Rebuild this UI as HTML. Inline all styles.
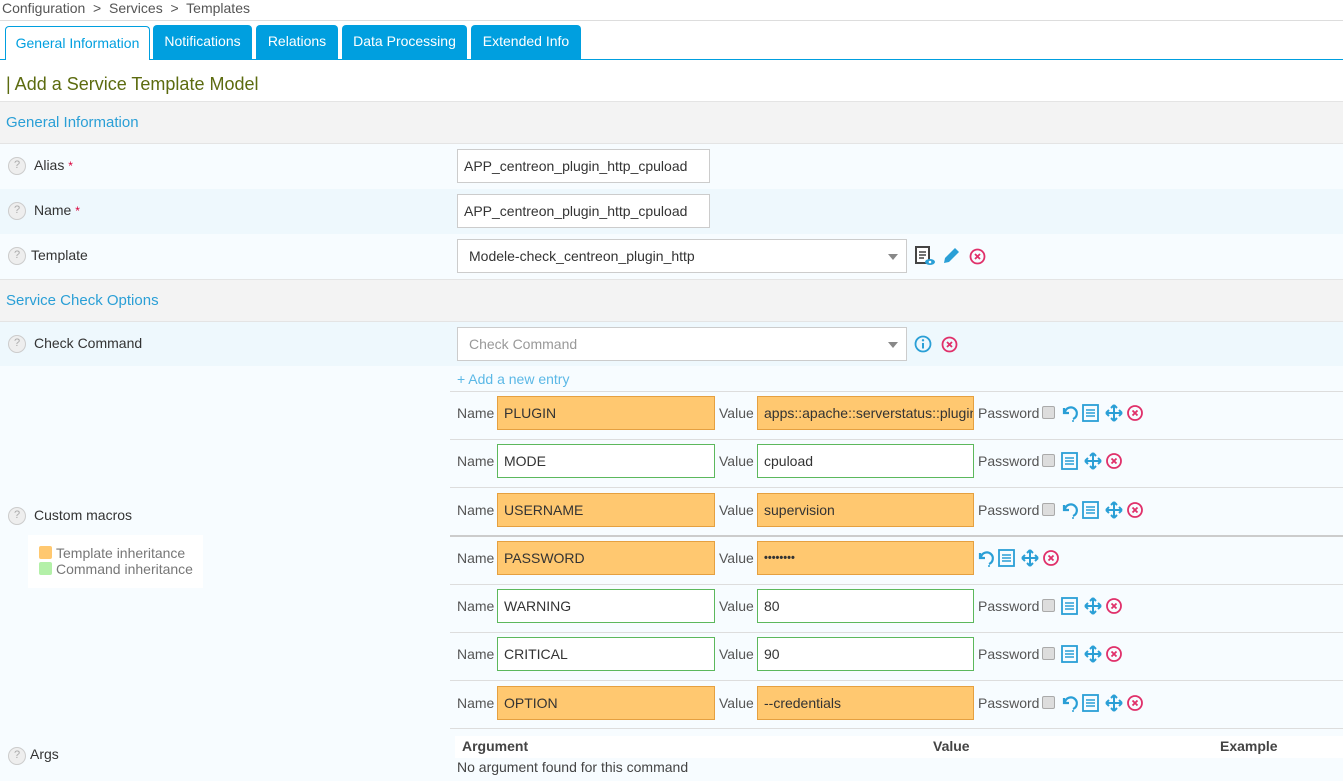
<!DOCTYPE html>
<html><head><meta charset="utf-8">
<style>
*{box-sizing:border-box;margin:0;padding:0}
body{width:1343px;height:781px;overflow:hidden;background:#fff;font-family:"Liberation Sans",Arial,sans-serif;font-size:14px;color:#333;position:relative}
.a{position:absolute;white-space:nowrap}
.tab{position:absolute;top:25px;height:35px;background:#009fdf;color:#fff;border-radius:4px 4px 0 0;font-size:14px;line-height:32px;text-align:center}
.row{position:absolute;left:0;width:1343px}
.q{position:absolute;width:18px;height:18px;border-radius:50%;border:1.5px solid #ccc;background:#eee;color:#aaa;font-size:11px;line-height:15px;text-align:center}
.lbl{position:absolute;font-size:14px;color:#333}
.star{color:#d9003b;font-size:12px}
.inp{position:absolute;height:34px;border:1px solid #ccc;background:#fff;padding-left:6px;line-height:32px;font-size:14px;color:#333;overflow:hidden}
.or{background:#ffc870;border-color:#e5a040}
.gr{background:#fff;border-color:#5cb85c}
.sm{position:absolute;font-size:14px;color:#555}
.sep{position:absolute;left:450px;width:893px;height:1px;background:#ddd}
.cb{position:absolute;width:13px;height:13px;border:1px solid #aaa;border-radius:2px;background:#ddd}
svg{position:absolute}
</style></head><body>
<div class="a" style="left:2px;top:0;color:#555;font-size:14px">Configuration &nbsp;&gt;&nbsp; Services &nbsp;&gt;&nbsp; Templates</div>
<div class="a" style="left:0;top:20px;width:1343px;height:1px;background:#ddd"></div>
<div class="a" style="left:0;top:59px;width:1343px;height:1px;background:#009fdf"></div>
<div class="tab" style="left:5px;width:145px;background:#fff;border:1px solid #009fdf;border-bottom:none;color:#009fdf;top:26px;height:34px;line-height:32px">General Information</div>
<div class="tab" style="left:153px;width:99px">Notifications</div>
<div class="tab" style="left:256px;width:82px">Relations</div>
<div class="tab" style="left:342px;width:125px">Data Processing</div>
<div class="tab" style="left:471px;width:110px">Extended Info</div>
<div class="a" style="left:6px;top:74px;font-size:18px;color:#5c6b0f">| Add a Service Template Model</div>
<div class="row" style="top:101px;height:43px;background:#f3f3f3;border-top:1px solid #e4e4e4;border-bottom:1px solid #e4e4e4"></div>
<div class="a" style="left:6px;top:114px;font-size:15px;color:#2a9fd6">General Information</div>
<div class="row" style="top:144px;height:45px;background:#f7fcff"></div>
<div class="row" style="top:189px;height:45px;background:#eef8fd"></div>
<div class="row" style="top:234px;height:45px;background:#f7fcff"></div>
<div class="row" style="top:279px;height:43px;background:#f3f3f3;border-top:1px solid #e4e4e4;border-bottom:1px solid #e4e4e4"></div>
<div class="a" style="left:6px;top:292px;font-size:15px;color:#2a9fd6">Service Check Options</div>
<div class="row" style="top:322px;height:44px;background:#eef8fd"></div>
<div class="row" style="top:366px;height:415px;background:#f7fcff"></div>

<div class="q" style="left:8px;top:157px">?</div><div class="lbl" style="left:34px;top:157px">Alias <span class="star">*</span></div>
<div class="q" style="left:8px;top:202px">?</div><div class="lbl" style="left:34px;top:202px">Name <span class="star">*</span></div>
<div class="q" style="left:8px;top:247px">?</div><div class="lbl" style="left:31px;top:247px">Template</div>
<div class="q" style="left:8px;top:335px">?</div><div class="lbl" style="left:34px;top:335px">Check Command</div>
<div class="q" style="left:8px;top:507px">?</div><div class="lbl" style="left:34px;top:507px">Custom macros</div>
<div class="a" style="left:28px;top:535px;width:175px;height:53px;background:#fff"></div>
<div class="a" style="left:39px;top:546px;width:13px;height:13px;background:#ffc870;border-radius:2px"></div>
<div class="a" style="left:39px;top:562px;width:13px;height:13px;background:#b3f0a8;border-radius:2px"></div>
<div class="a" style="left:56px;top:545px;font-size:14px;color:#777">Template inheritance</div>
<div class="a" style="left:56px;top:561px;font-size:14px;color:#777">Command inheritance</div>
<div class="q" style="left:8px;top:747px">?</div><div class="lbl" style="left:30px;top:746px">Args</div>

<div class="inp" style="left:457px;top:149px;width:253px">APP_centreon_plugin_http_cpuload</div>
<div class="inp" style="left:457px;top:194px;width:253px">APP_centreon_plugin_http_cpuload</div>
<div class="inp" style="left:457px;top:239px;width:450px;padding-left:11px">Modele-check_centreon_plugin_http</div>
<div class="a" style="left:888px;top:254px;border-left:5px solid transparent;border-right:5px solid transparent;border-top:6px solid #888"></div>
<svg style="left:914px;top:245px" width="22" height="22" viewBox="0 0 22 22"><rect x="2" y="2" width="13" height="16" fill="#fff" stroke="#444" stroke-width="2"/><path d="M5 7h7M5 10h7M5 13h5" stroke="#444" stroke-width="1.5"/><ellipse cx="16" cy="17" rx="5" ry="3" fill="#2a9fd6"/><circle cx="16" cy="17" r="1.3" fill="#fff"/></svg>
<svg style="left:941px;top:246px" width="20" height="20" viewBox="0 0 20 20"><path d="M3 17l1-5L14 2l4 4L8 16z" fill="#2a9fd6"/></svg>
<svg style="left:969px;top:248px" width="17" height="17" viewBox="0 0 17 17"><circle cx="8.5" cy="8.5" r="7" fill="none" stroke="#e0306a" stroke-width="1.8"/><path d="M6 6l5 5M11 6l-5 5" stroke="#e0306a" stroke-width="1.8"/></svg>

<div class="inp" style="left:457px;top:327px;width:450px;padding-left:11px;color:#999">Check Command</div>
<div class="a" style="left:888px;top:342px;border-left:5px solid transparent;border-right:5px solid transparent;border-top:6px solid #888"></div>
<svg style="left:914px;top:335px" width="18" height="18" viewBox="0 0 18 18"><circle cx="9" cy="9" r="7.5" fill="none" stroke="#2a9fd6" stroke-width="1.8"/><circle cx="9" cy="5.3" r="1.2" fill="#2a9fd6"/><path d="M9 8v5.5" stroke="#2a9fd6" stroke-width="2"/></svg>
<svg style="left:941px;top:336px" width="17" height="17" viewBox="0 0 17 17"><circle cx="8.5" cy="8.5" r="7" fill="none" stroke="#e0306a" stroke-width="1.8"/><path d="M6 6l5 5M11 6l-5 5" stroke="#e0306a" stroke-width="1.8"/></svg>
<div class="a" style="left:457px;top:371px;font-size:14px;color:#5bb8e6">+ Add a new entry</div>

<div class="sep" style="top:391px"></div>
<div class="sep" style="top:439px"></div>
<div class="sep" style="top:487px"></div>
<div class="sep" style="top:535px;height:2px;background:#ccc"></div>
<div class="sep" style="top:584px"></div>
<div class="sep" style="top:632px"></div>
<div class="sep" style="top:680px"></div>
<div class="sep" style="top:728px"></div>

<!-- macro rows -->
<div class="sm" style="left:457px;top:405px">Name</div><div class="inp or" style="left:497px;top:396px;width:218px">PLUGIN</div><div class="sm" style="left:719px;top:405px">Value</div><div class="inp or" style="left:757px;top:396px;width:217px">apps::apache::serverstatus::plugin</div><div class="sm" style="left:978px;top:405px">Password</div><div class="cb" style="left:1042px;top:406px"></div>
<div class="sm" style="left:457px;top:453px">Name</div><div class="inp gr" style="left:497px;top:444px;width:218px">MODE</div><div class="sm" style="left:719px;top:453px">Value</div><div class="inp gr" style="left:757px;top:444px;width:217px">cpuload</div><div class="sm" style="left:978px;top:453px">Password</div><div class="cb" style="left:1042px;top:454px"></div>
<div class="sm" style="left:457px;top:502px">Name</div><div class="inp or" style="left:497px;top:493px;width:218px">USERNAME</div><div class="sm" style="left:719px;top:502px">Value</div><div class="inp or" style="left:757px;top:493px;width:217px">supervision</div><div class="sm" style="left:978px;top:502px">Password</div><div class="cb" style="left:1042px;top:503px"></div>
<div class="sm" style="left:457px;top:550px">Name</div><div class="inp or" style="left:497px;top:541px;width:218px">PASSWORD</div><div class="sm" style="left:719px;top:550px">Value</div><div class="inp or" style="left:757px;top:541px;width:217px;font-size:11px;font-weight:bold">••••••••</div>
<div class="sm" style="left:457px;top:598px">Name</div><div class="inp gr" style="left:497px;top:589px;width:218px">WARNING</div><div class="sm" style="left:719px;top:598px">Value</div><div class="inp gr" style="left:757px;top:589px;width:217px">80</div><div class="sm" style="left:978px;top:598px">Password</div><div class="cb" style="left:1042px;top:599px"></div>
<div class="sm" style="left:457px;top:646px">Name</div><div class="inp gr" style="left:497px;top:637px;width:218px">CRITICAL</div><div class="sm" style="left:719px;top:646px">Value</div><div class="inp gr" style="left:757px;top:637px;width:217px">90</div><div class="sm" style="left:978px;top:646px">Password</div><div class="cb" style="left:1042px;top:647px"></div>
<div class="sm" style="left:457px;top:695px">Name</div><div class="inp or" style="left:497px;top:686px;width:218px">OPTION</div><div class="sm" style="left:719px;top:695px">Value</div><div class="inp or" style="left:757px;top:686px;width:217px">--credentials</div><div class="sm" style="left:978px;top:695px">Password</div><div class="cb" style="left:1042px;top:696px"></div>

<!-- icon sets: undo, list, move, delete -->
<svg style="left:1061px;top:403px" width="84" height="20" viewBox="0 0 84 20">
<path d="M3 5v5h5M4 9a6 6 0 1 1 8 7" fill="none" stroke="#2a9fd6" stroke-width="2.2"/><circle cx="12" cy="18" r="1" fill="#2a9fd6"/>
<rect x="22" y="2" width="15" height="16" fill="none" stroke="#2a9fd6" stroke-width="1.8"/><path d="M25 7h9M25 10h9M25 13h9" stroke="#2a9fd6" stroke-width="1.4"/>
<path d="M53 2v16M45 10h16M53 2l-3 3M53 2l3 3M53 18l-3-3M53 18l3-3M45 10l3-3M45 10l3 3M61 10l-3-3M61 10l-3 3" stroke="#2a9fd6" stroke-width="2" fill="none"/>
<circle cx="74" cy="10" r="7" fill="none" stroke="#e0306a" stroke-width="1.8"/><path d="M71.5 7.5l5 5M76.5 7.5l-5 5" stroke="#e0306a" stroke-width="1.8"/></svg>
<svg style="left:1061px;top:500px" width="84" height="20" viewBox="0 0 84 20">
<path d="M3 5v5h5M4 9a6 6 0 1 1 8 7" fill="none" stroke="#2a9fd6" stroke-width="2.2"/><circle cx="12" cy="18" r="1" fill="#2a9fd6"/>
<rect x="22" y="2" width="15" height="16" fill="none" stroke="#2a9fd6" stroke-width="1.8"/><path d="M25 7h9M25 10h9M25 13h9" stroke="#2a9fd6" stroke-width="1.4"/>
<path d="M53 2v16M45 10h16M53 2l-3 3M53 2l3 3M53 18l-3-3M53 18l3-3M45 10l3-3M45 10l3 3M61 10l-3-3M61 10l-3 3" stroke="#2a9fd6" stroke-width="2" fill="none"/>
<circle cx="74" cy="10" r="7" fill="none" stroke="#e0306a" stroke-width="1.8"/><path d="M71.5 7.5l5 5M76.5 7.5l-5 5" stroke="#e0306a" stroke-width="1.8"/></svg>
<svg style="left:977px;top:548px" width="84" height="20" viewBox="0 0 84 20">
<path d="M3 5v5h5M4 9a6 6 0 1 1 8 7" fill="none" stroke="#2a9fd6" stroke-width="2.2"/><circle cx="12" cy="18" r="1" fill="#2a9fd6"/>
<rect x="22" y="2" width="15" height="16" fill="none" stroke="#2a9fd6" stroke-width="1.8"/><path d="M25 7h9M25 10h9M25 13h9" stroke="#2a9fd6" stroke-width="1.4"/>
<path d="M53 2v16M45 10h16M53 2l-3 3M53 2l3 3M53 18l-3-3M53 18l3-3M45 10l3-3M45 10l3 3M61 10l-3-3M61 10l-3 3" stroke="#2a9fd6" stroke-width="2" fill="none"/>
<circle cx="74" cy="10" r="7" fill="none" stroke="#e0306a" stroke-width="1.8"/><path d="M71.5 7.5l5 5M76.5 7.5l-5 5" stroke="#e0306a" stroke-width="1.8"/></svg>
<svg style="left:1061px;top:693px" width="84" height="20" viewBox="0 0 84 20">
<path d="M3 5v5h5M4 9a6 6 0 1 1 8 7" fill="none" stroke="#2a9fd6" stroke-width="2.2"/><circle cx="12" cy="18" r="1" fill="#2a9fd6"/>
<rect x="22" y="2" width="15" height="16" fill="none" stroke="#2a9fd6" stroke-width="1.8"/><path d="M25 7h9M25 10h9M25 13h9" stroke="#2a9fd6" stroke-width="1.4"/>
<path d="M53 2v16M45 10h16M53 2l-3 3M53 2l3 3M53 18l-3-3M53 18l3-3M45 10l3-3M45 10l3 3M61 10l-3-3M61 10l-3 3" stroke="#2a9fd6" stroke-width="2" fill="none"/>
<circle cx="74" cy="10" r="7" fill="none" stroke="#e0306a" stroke-width="1.8"/><path d="M71.5 7.5l5 5M76.5 7.5l-5 5" stroke="#e0306a" stroke-width="1.8"/></svg>
<svg style="left:1040px;top:451px" width="84" height="20" viewBox="0 0 84 20">
<rect x="22" y="2" width="15" height="16" fill="none" stroke="#2a9fd6" stroke-width="1.8"/><path d="M25 7h9M25 10h9M25 13h9" stroke="#2a9fd6" stroke-width="1.4"/>
<path d="M53 2v16M45 10h16M53 2l-3 3M53 2l3 3M53 18l-3-3M53 18l3-3M45 10l3-3M45 10l3 3M61 10l-3-3M61 10l-3 3" stroke="#2a9fd6" stroke-width="2" fill="none"/>
<circle cx="74" cy="10" r="7" fill="none" stroke="#e0306a" stroke-width="1.8"/><path d="M71.5 7.5l5 5M76.5 7.5l-5 5" stroke="#e0306a" stroke-width="1.8"/></svg>
<svg style="left:1040px;top:596px" width="84" height="20" viewBox="0 0 84 20">
<rect x="22" y="2" width="15" height="16" fill="none" stroke="#2a9fd6" stroke-width="1.8"/><path d="M25 7h9M25 10h9M25 13h9" stroke="#2a9fd6" stroke-width="1.4"/>
<path d="M53 2v16M45 10h16M53 2l-3 3M53 2l3 3M53 18l-3-3M53 18l3-3M45 10l3-3M45 10l3 3M61 10l-3-3M61 10l-3 3" stroke="#2a9fd6" stroke-width="2" fill="none"/>
<circle cx="74" cy="10" r="7" fill="none" stroke="#e0306a" stroke-width="1.8"/><path d="M71.5 7.5l5 5M76.5 7.5l-5 5" stroke="#e0306a" stroke-width="1.8"/></svg>
<svg style="left:1040px;top:644px" width="84" height="20" viewBox="0 0 84 20">
<rect x="22" y="2" width="15" height="16" fill="none" stroke="#2a9fd6" stroke-width="1.8"/><path d="M25 7h9M25 10h9M25 13h9" stroke="#2a9fd6" stroke-width="1.4"/>
<path d="M53 2v16M45 10h16M53 2l-3 3M53 2l3 3M53 18l-3-3M53 18l3-3M45 10l3-3M45 10l3 3M61 10l-3-3M61 10l-3 3" stroke="#2a9fd6" stroke-width="2" fill="none"/>
<circle cx="74" cy="10" r="7" fill="none" stroke="#e0306a" stroke-width="1.8"/><path d="M71.5 7.5l5 5M76.5 7.5l-5 5" stroke="#e0306a" stroke-width="1.8"/></svg>

<div class="a" style="left:455px;top:736px;width:888px;height:22px;background:#fff"></div>
<div class="a" style="left:462px;top:738px;font-weight:bold;color:#444;font-size:14px">Argument</div>
<div class="a" style="left:933px;top:738px;font-weight:bold;color:#444;font-size:14px">Value</div>
<div class="a" style="left:1220px;top:738px;font-weight:bold;color:#444;font-size:14px">Example</div>
<div class="a" style="left:457px;top:759px;color:#444;font-size:14px">No argument found for this command</div>
</body></html>
